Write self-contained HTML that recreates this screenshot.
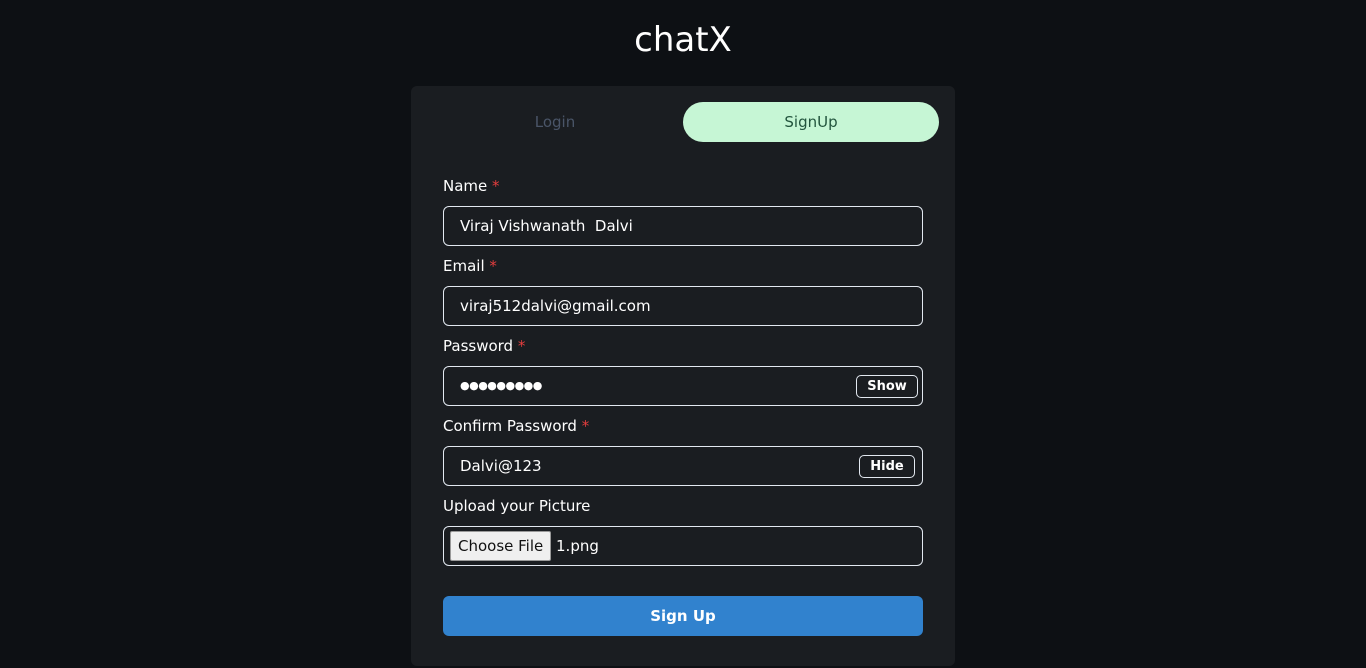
<!DOCTYPE html>
<html><head><style>
*{margin:0;padding:0;box-sizing:border-box}
body{width:1366px;height:668px;background:#0d1014;font-family:"DejaVu Sans","Liberation Sans",sans-serif;color:#fff;position:relative;overflow:hidden}
.a{position:absolute}
.title{left:0;width:1366px;top:20px;text-align:center;font-size:34px;font-family:"DejaVu Sans",sans-serif}
.card{left:411px;top:86px;width:544px;height:580px;background:#1a1d21;border-radius:6px}
.tab{top:102px;height:40px;width:256px;border-radius:20px;text-align:center;line-height:40px;font-size:15px}
.lbl{left:443px;font-size:15px;top:0;line-height:20px;font-weight:500}
.lbl span{color:#e53e3e}
.inp{left:443px;width:480px;height:40px;border:1px solid #e2e8f0;border-radius:6px;font-size:15px;line-height:38px;padding-left:16px}
.btn{position:absolute;top:8px;height:23px;border:1px solid #e2e8f0;border-radius:5px;font-size:13px;font-weight:bold;line-height:21px;text-align:center}
</style></head><body>
<div class="a title">chatX</div>
<div class="a card"></div>
<div class="a tab" style="left:427px;color:#4a5568">Login</div>
<div class="a tab" style="left:683px;background:#c6f6d5;color:#22543d">SignUp</div>
<div class="a lbl" style="top:176px">Name <span>*</span></div>
<div class="a inp" style="top:206px">Viraj Vishwanath&nbsp; Dalvi</div>
<div class="a lbl" style="top:256px">Email <span>*</span></div>
<div class="a inp" style="top:286px">viraj512dalvi@gmail.com</div>
<div class="a lbl" style="top:336px">Password <span>*</span></div>
<div class="a inp" style="top:366px;font-size:11px;letter-spacing:-0.5px">●●●●●●●●●<div class="btn" style="left:412px;width:62px;letter-spacing:0">Show</div></div>
<div class="a lbl" style="top:416px">Confirm Password <span>*</span></div>
<div class="a inp" style="top:446px">Dalvi@123<div class="btn" style="left:415px;width:56px">Hide</div></div>
<div class="a lbl" style="top:496px">Upload your Picture</div>
<div class="a inp" style="top:526px;padding-left:6px"><span style="display:inline-block;background:#efefef;color:#111;border:1px solid #999;border-radius:2px;height:30px;line-height:28px;padding:0 7px;vertical-align:middle;font-size:15px;margin-top:-2px">Choose File</span> 1.png</div>
<div class="a" style="left:443px;top:596px;width:480px;height:40px;background:#3182ce;border-radius:6px;text-align:center;line-height:40px;font-size:15px;font-weight:bold">Sign Up</div>
</body></html>
